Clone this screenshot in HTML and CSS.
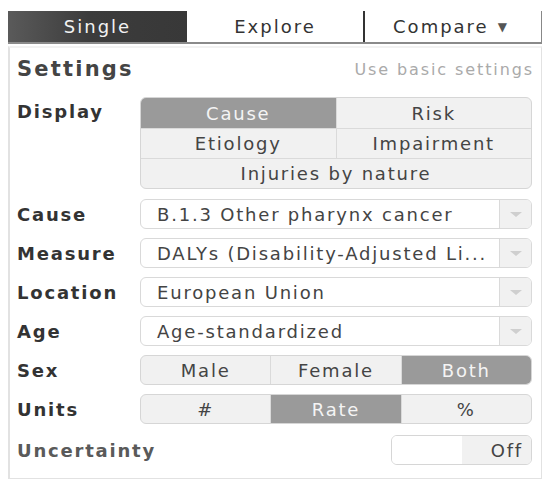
FILE: index.html
```html
<!DOCTYPE html>
<html>
<head>
<meta charset="utf-8">
<link rel="stylesheet" href="styles.css">
</head>
<body>
<div class="app">
  <div class="tabs">
    <div class="tab active">Single</div>
    <div class="tab">Explore</div>
    <div class="tab compare">Compare<span class="caret">▼</span></div>
  </div>
  <div class="panel">
    <div class="head">
      <div class="title">Settings</div>
      <div class="basic">Use basic settings</div>
    </div>
    <div class="rows">
      <div class="row">
        <div class="label">Display</div>
        <div class="grid3">
          <div class="gr">
            <div class="cell on">Cause</div>
            <div class="cell">Risk</div>
          </div>
          <div class="gr">
            <div class="cell">Etiology</div>
            <div class="cell">Impairment</div>
          </div>
          <div class="gr">
            <div class="cell">Injuries by nature</div>
          </div>
        </div>
      </div>
      <div class="row">
        <div class="label">Cause</div>
        <div class="select"><span class="val">B.1.3 Other pharynx cancer</span><span class="arrow"><i></i></span></div>
      </div>
      <div class="row">
        <div class="label">Measure</div>
        <div class="select"><span class="val">DALYs (Disability-Adjusted Li...</span><span class="arrow"><i></i></span></div>
      </div>
      <div class="row">
        <div class="label">Location</div>
        <div class="select"><span class="val">European Union</span><span class="arrow"><i></i></span></div>
      </div>
      <div class="row">
        <div class="label">Age</div>
        <div class="select"><span class="val">Age-standardized</span><span class="arrow"><i></i></span></div>
      </div>
      <div class="row">
        <div class="label">Sex</div>
        <div class="seg">
          <div class="s">Male</div>
          <div class="s">Female</div>
          <div class="s on">Both</div>
        </div>
      </div>
      <div class="row">
        <div class="label">Units</div>
        <div class="seg">
          <div class="s">#</div>
          <div class="s on">Rate</div>
          <div class="s">%</div>
        </div>
      </div>
      <div class="row unc">
        <div class="label light">Uncertainty</div>
        <div class="toggle"><div class="tl"></div><div class="tr">Off</div></div>
      </div>
    </div>
  </div>
</div>
</body>
</html>
```

FILE: styles.css
```css
* { box-sizing: border-box; }
body {
  margin: 0;
  background: #fff;
  font-family: "DejaVu Sans", Verdana, sans-serif;
  color: #444;
  letter-spacing: 1.8px;
}
.app {
  width: 534px;
  margin: 11px 0 0 8px;
}
.tabs {
  display: flex;
  height: 33px;
  border-bottom: 2px solid #8a8a8a;
}
.tab {
  flex: 0 0 176px;
  display: flex;
  align-items: center;
  justify-content: center;
  font-size: 18px;
  letter-spacing: 2px;
  color: #333;
  background: #fff;
}
.tab.active {
  flex-basis: 179px;
  background: linear-gradient(90deg, #5a5a5a 0%, #3c3c3c 45%, #383838 100%);
  color: #f2f2f2;
}
.tab.compare {
  flex: 1;
  border-left: 2px solid #333;
  border-right: 1px solid #888;
  padding-right: 6px;
}
.caret {
  font-size: 12px;
  margin-left: 9px;
  letter-spacing: 0;
  color: #555;
}
.panel {
  margin-top: 2px;
  border: 1px solid #e2e2e2;
  border-top: 2px solid #f2f2f2;
  border-left-width: 2px;
  height: 433px;
  padding: 0 9px 0 7px;
}
.head {
  display: flex;
  justify-content: space-between;
  align-items: center;
  height: 39px;
  padding-top: 3px;
}
.title {
  font-weight: bold;
  font-size: 21px;
  color: #444;
  letter-spacing: 2.2px;
}
.basic {
  font-size: 16px;
  color: #aaa;
  letter-spacing: 1.9px;
  margin-right: -2px;
}
.rows {
  display: flex;
  flex-direction: column;
  gap: 9px;
  margin-top: 10px;
}
.row {
  display: grid;
  grid-template-columns: 123px 1fr;
  align-items: center;
}
.row:nth-child(2) { margin-top: 1px; }
.row.unc { margin-top: 2px; }
.label {
  font-weight: bold;
  font-size: 18px;
  color: #333;
  letter-spacing: 1.8px;
}
.row:first-child { align-items: start; }
.row:first-child .label { padding-top: 4px; }
.label.light { color: #5a5a5a; }
.grid3 {
  border: 1px solid #d6d6d6;
  border-radius: 6px;
  overflow: hidden;
  background: #f1f1f1;
}
.gr {
  display: flex;
  height: 30px;
  border-top: 1px solid #dadada;
}
.gr:first-child { border-top: 0; }
.cell {
  flex: 1;
  display: flex;
  align-items: center;
  justify-content: center;
  font-size: 18px;
  color: #444;
}
.cell + .cell { border-left: 1px solid #dadada; }
.cell.on { background: #9a9a9a; color: #f4f4f4; }
.select {
  display: flex;
  height: 30px;
  border: 1px solid #d9d9d9;
  border-radius: 6px;
  overflow: hidden;
  background: #fff;
}
.val {
  flex: 1;
  padding-left: 16px;
  display: flex;
  align-items: center;
  font-size: 18px;
  color: #444;
  white-space: nowrap;
}
.arrow {
  flex: 0 0 32px;
  background: #f1f1f1;
  border-left: 1px solid #dadada;
  display: flex;
  align-items: center;
  justify-content: center;
}
.arrow i {
  display: block;
  width: 0;
  height: 0;
  border-left: 6px solid transparent;
  border-right: 6px solid transparent;
  border-top: 5px solid #cfcfcf;
}
.seg {
  display: flex;
  height: 30px;
  border: 1px solid #d6d6d6;
  border-radius: 6px;
  overflow: hidden;
  background: #f1f1f1;
}
.s {
  flex: 1;
  display: flex;
  align-items: center;
  justify-content: center;
  font-size: 18px;
  color: #444;
}
.s + .s { border-left: 1px solid #dadada; }
.s.on { background: #9a9a9a; color: #f4f4f4; }
.toggle {
  justify-self: end;
  display: flex;
  width: 141px;
  height: 30px;
  border: 1px solid #d6d6d6;
  border-radius: 6px;
  overflow: hidden;
}
.tl { flex: 0 0 70px; background: #fff; }
.tr {
  flex: 1;
  background: #f1f1f1;
  display: flex;
  align-items: center;
  justify-content: flex-end;
  padding-right: 8px;
  font-size: 18px;
  color: #444;
}
```
